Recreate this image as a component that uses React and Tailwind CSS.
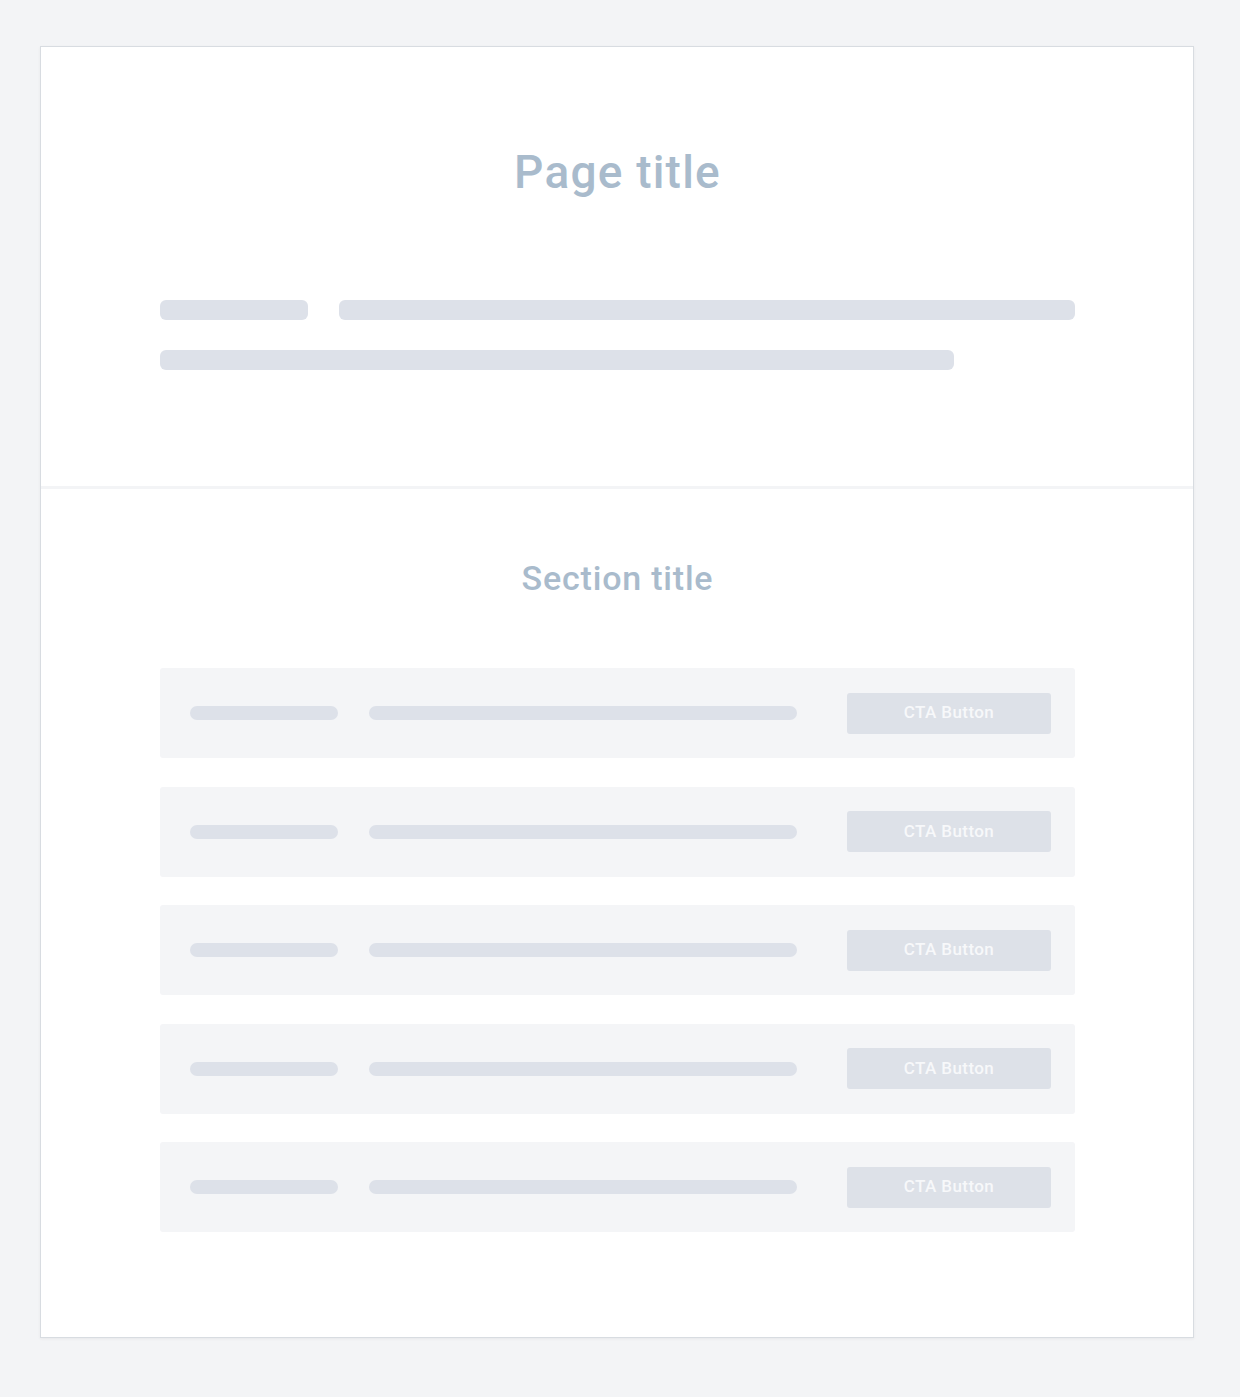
// ── Skeleton bar ───────────────────────────────────────────────────────────
const Bar = ({ className = "" }) => (
  <div className={`bg-[#dde1e9] ${className}`} />
);

// ── List row ───────────────────────────────────────────────────────────────
const ListRow = () => (
  <div className="flex items-center h-[90px] bg-[#f4f5f7] rounded-[3px] pl-[30px] pr-[24px]">
    <Bar className="w-[148px] h-[14px] rounded-full" />
    <Bar className="w-[428px] h-[14px] rounded-full ml-[31px]" />
    <button
      type="button"
      className="ml-auto w-[204px] h-[41px] rounded-[3px] bg-[#dde1e8] text-[#f7f8fa] text-[17px] tracking-[0.4px] font-medium"
    >
      CTA Button
    </button>
  </div>
);

export default function App() {
  return (
    <div
      className="min-h-[1397px] bg-[#f3f4f6] pt-[46px] pl-[40px]"
      style={{ fontFamily: "Roboto, 'Liberation Sans', sans-serif" }}
    >
      <div className="w-[1154px] bg-white border border-[#d8dce1] shadow-[0_1px_3px_rgba(0,0,0,0.05)]">
        {/* Header section */}
        <div className="pt-[99px] pb-[116px] pl-[119px] pr-[118px]">
          <h1 className="text-center text-[46px] leading-[52px] tracking-[1.2px] font-medium text-[#a9bbcc]">
            Page title
          </h1>
          <div className="flex gap-[31px] mt-[102px]">
            <Bar className="w-[148px] h-[20px] rounded-[6px]" />
            <Bar className="flex-1 h-[20px] rounded-[6px]" />
          </div>
          <Bar className="w-[794px] h-[20px] rounded-[6px] mt-[30px]" />
        </div>

        <div className="h-[3px] bg-[#f3f4f6]" />

        {/* List section */}
        <div className="pt-[69px] pb-[105px] pl-[119px] pr-[118px]">
          <h2 className="text-center text-[34px] leading-[40px] tracking-[0.8px] font-medium text-[#a9bbcc]">
            Section title
          </h2>
          <div className="flex flex-col gap-[28.5px] mt-[70px]">
            <ListRow />
            <ListRow />
            <ListRow />
            <ListRow />
            <ListRow />
          </div>
        </div>
      </div>
    </div>
  );
}
